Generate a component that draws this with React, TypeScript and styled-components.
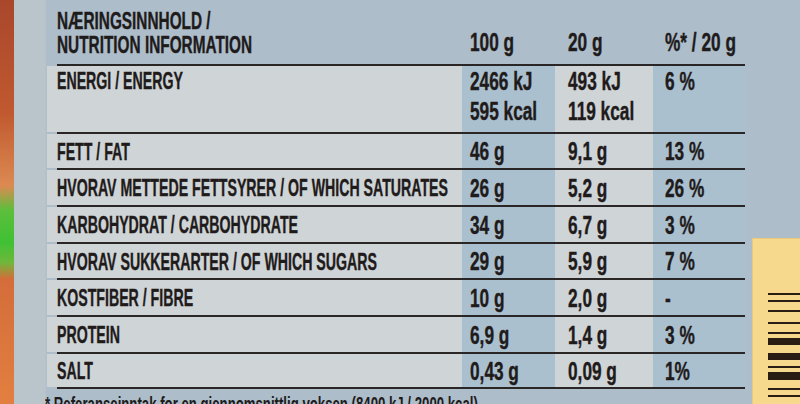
import React from "react";
import styled, { createGlobalStyle } from "styled-components";

type Tone = "light" | "blue" | "none";

interface Nutrient {
  label: string;
  per100: string[];
  per20: string[];
  pct: string;
  height: number;
}

// row heights include the 2px rule underneath
const nutrients: Nutrient[] = [
  { label: "ENERGI / ENERGY", per100: ["2466 kJ", "595 kcal"], per20: ["493 kJ", "119 kcal"], pct: "6 %", height: 68 },
  { label: "FETT / FAT", per100: ["46 g"], per20: ["9,1 g"], pct: "13 %", height: 36 },
  { label: "HVORAV METTEDE FETTSYRER / OF WHICH SATURATES", per100: ["26 g"], per20: ["5,2 g"], pct: "26 %", height: 37 },
  { label: "KARBOHYDRAT / CARBOHYDRATE", per100: ["34 g"], per20: ["6,7 g"], pct: "3 %", height: 37 },
  { label: "HVORAV SUKKERARTER / OF WHICH SUGARS", per100: ["29 g"], per20: ["5,9 g"], pct: "7 %", height: 36 },
  { label: "KOSTFIBER / FIBRE", per100: ["10 g"], per20: ["2,0 g"], pct: "-", height: 37 },
  { label: "PROTEIN", per100: ["6,9 g"], per20: ["1,4 g"], pct: "3 %", height: 37 },
  { label: "SALT", per100: ["0,43 g"], per20: ["0,09 g"], pct: "1%", height: 35 },
];

// barcode bars: [top, thickness] relative to the yellow panel
const bars: [number, number][] = [
  [55, 2], [62, 2], [72, 2], [84, 2], [94, 2], [100, 7], [115, 7], [128, 2], [134, 8], [150, 2], [157, 2],
];

const GlobalStyle = createGlobalStyle`
  html, body {
    margin: 0;
    padding: 0;
    width: 800px;
    height: 404px;
    overflow: hidden;
    background: #adbecb;
  }
  body {
    font-family: "Liberation Sans", Arial, sans-serif;
    color: #1f1b1b;
  }
`;

const Page = styled.div`
  display: flex;
  width: 800px;
  height: 404px;
  overflow: hidden;
`;

const PhotoEdge = styled.div`
  flex: 0 0 14px;
  background: linear-gradient(
    180deg,
    #a9472c 0%,
    #c0592f 28%,
    #dc8a52 46%,
    #5cbf3c 52%,
    #3fc134 60%,
    #6fb83a 65%,
    #d46d3a 69%,
    #e27f40 100%
  );
`;

const Card = styled.div`
  flex: 1;
  display: flex;
  padding-left: 43px;
  background: linear-gradient(90deg, #b9c4cb 0 31px, #adbdca 33px);
`;

const Main = styled.div`
  display: flex;
  flex-direction: column;
  width: 688px;
  flex-shrink: 0;
`;

const Row = styled.div<{ $h: number; $top?: boolean }>`
  display: grid;
  grid-template-columns: 405px 93px 98px 92px;
  flex-shrink: 0;
  box-sizing: border-box;
  height: ${(p) => p.$h}px;
  border-bottom: 2px solid #2a2625;
  align-items: ${(p) => (p.$top ? "start" : "center")};
`;

const HeaderRow = styled(Row)`
  align-items: end;
  padding-bottom: 7px;
`;

const Cell = styled.div<{ $tone: Tone; $pad: number }>`
  height: 100%;
  box-sizing: border-box;
  display: flex;
  flex-direction: column;
  justify-content: flex-end;
  padding-left: ${(p) => p.$pad}px;
  background: ${(p) =>
    p.$tone === "light" ? "#cfd4d6" : p.$tone === "blue" ? "#abc0cf" : "transparent"};
`;

const LabelCell = styled(Cell)`
  box-shadow: -10px 0 0 #cfd4d6;
`;

const Stack = styled.div<{ $center?: boolean }>`
  display: flex;
  flex-direction: column;
  justify-content: ${(p) => (p.$center ? "center" : "flex-start")};
  box-sizing: border-box;
  height: 100%;
`;

const Cond = styled.span<{ $size: number; $sx: number; $lh: number }>`
  display: block;
  white-space: nowrap;
  font-weight: 700;
  font-size: ${(p) => p.$size}px;
  line-height: ${(p) => p.$lh}px;
  transform: scaleX(${(p) => p.$sx});
  transform-origin: 0 50%;
  -webkit-text-stroke: 0.4px #1f1b1b;
`;

const Footnote = styled.div`
  flex-shrink: 0;
  padding-top: 4px;
  margin-left: -12px;
  font-size: 20px;
  font-weight: 700;
  line-height: 22px;
  white-space: nowrap;
  transform: scaleX(0.66);
  transform-origin: 0 50%;
`;

const Aside = styled.div`
  flex: 1;
  display: flex;
  flex-direction: column;
  justify-content: flex-end;
  padding-left: 7px;
`;

const YellowPanel = styled.div`
  height: 166px;
  flex-shrink: 0;
  background: #f7d98d;
  box-shadow: inset 1px 1px 0 #e9c97c;
`;

const Label = ({ text }: { text: string }) => (
  <Cond $size={24} $sx={0.59} $lh={29}>
    {text}
  </Cond>
);

const Value = ({ text }: { text: string }) => (
  <Cond $size={25} $sx={0.69} $lh={30}>
    {text}
  </Cond>
);

const App: React.FC = () => {
  return (
    <>
      <GlobalStyle />
      <Page>
        <PhotoEdge />
        <Card>
          <Main>
            <HeaderRow $h={66}>
              <Cell $tone="none" $pad={0}>
                <Cond $size={24} $sx={0.64} $lh={24}>NÆRINGSINNHOLD /</Cond>
                <Cond $size={24} $sx={0.64} $lh={24}>NUTRITION INFORMATION</Cond>
              </Cell>
              <Cell $tone="none" $pad={8}>
                <Value text="100 g" />
              </Cell>
              <Cell $tone="none" $pad={13}>
                <Value text="20 g" />
              </Cell>
              <Cell $tone="none" $pad={12}>
                <Value text="%* / 20 g" />
              </Cell>
            </HeaderRow>
            {nutrients.map((n) => {
              const multi = n.per100.length > 1;
              return (
                <Row key={n.label} $h={n.height} $top={multi}>
                  <LabelCell $tone="light" $pad={0}>
                    <Stack $center={!multi}>
                      <Label text={n.label} />
                    </Stack>
                  </LabelCell>
                  <Cell $tone="blue" $pad={8}>
                    <Stack $center={!multi}>
                      {n.per100.map((v) => (
                        <Value key={v} text={v} />
                      ))}
                    </Stack>
                  </Cell>
                  <Cell $tone="light" $pad={13}>
                    <Stack $center={!multi}>
                      {n.per20.map((v) => (
                        <Value key={v} text={v} />
                      ))}
                    </Stack>
                  </Cell>
                  <Cell $tone="blue" $pad={12}>
                    <Stack $center={!multi}>
                      <Value text={n.pct} />
                    </Stack>
                  </Cell>
                </Row>
              );
            })}
            <Footnote>* Referanseinntak for en gjennomsnittlig voksen (8400 kJ / 2000 kcal)</Footnote>
          </Main>
          <Aside>
            <YellowPanel>
              <svg width="48" height="166" viewBox="0 0 48 166">
                {bars.map(([y, h]) => (
                  <rect key={y} x="16" y={y} width="32" height={h} fill="#2a1d14" />
                ))}
              </svg>
            </YellowPanel>
          </Aside>
        </Card>
      </Page>
    </>
  );
};

export default App;
